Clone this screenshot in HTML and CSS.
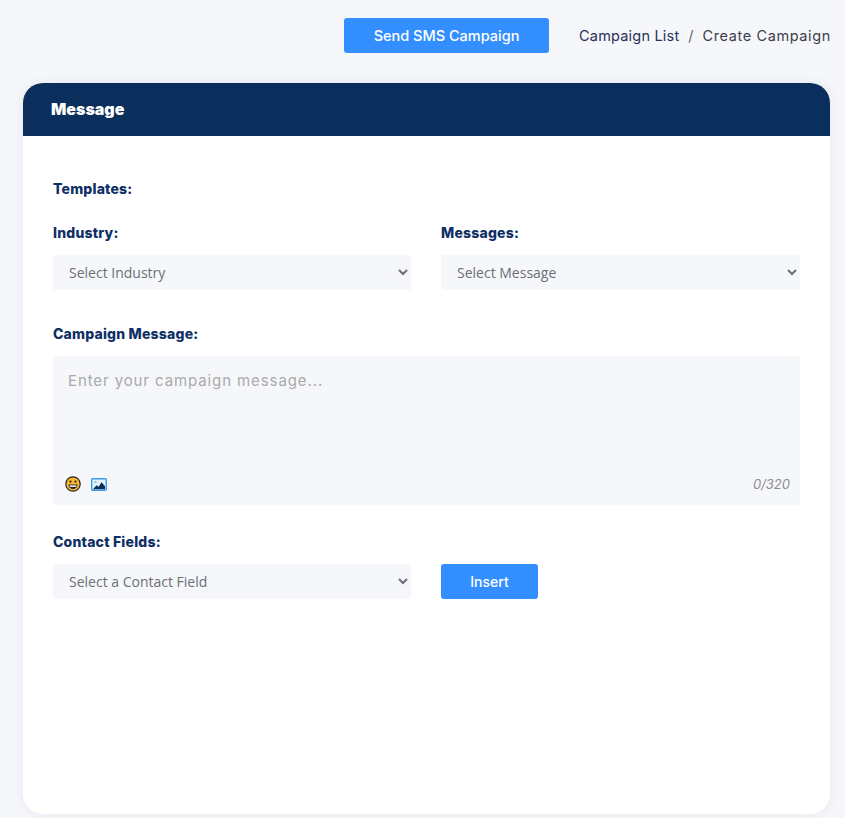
FILE: index.html
```html
<!DOCTYPE html>
<html lang="en">
<head>
  <meta charset="UTF-8">
  <title>Create Campaign</title>
  <link rel="stylesheet" href="styles.css">
</head>
<body>
  <!-- Top bar -->
  <div class="topbar">
    <button class="btn btn-send">Send SMS Campaign</button>
    <div class="breadcrumb">
      <span class="crumb-link">Campaign List</span>
      <span class="crumb-sep">/</span>
      <span class="crumb-current">Create Campaign</span>
    </div>
  </div>

  <!-- Message card -->
  <div class="card">
    <div class="card-header">Message</div>
    <div class="card-body">
      <div class="section-label">Templates:</div>

      <div class="row row-templates">
        <div class="field">
          <label class="field-label">Industry:</label>
          <select class="select"><option>Select Industry</option></select>
        </div>
        <div class="field">
          <label class="field-label">Messages:</label>
          <select class="select"><option>Select Message</option></select>
        </div>
      </div>

      <div class="field field-message">
        <label class="field-label">Campaign Message:</label>
        <div class="message-box">
          <div class="message-text">Enter your campaign message...</div>
          <div class="message-footer">
            <div class="message-tools">
              <svg class="icon" width="16" height="16" viewBox="0 0 16 16">
                <circle cx="8" cy="8" r="7.2" fill="#fdb92e" stroke="#222" stroke-width="1.2"/>
                <circle cx="5.5" cy="5.6" r="1.1" fill="#222"/>
                <circle cx="10.5" cy="5.6" r="1.1" fill="#222"/>
                <path d="M3.4 8.600h9.200c0 2.800-2.100 4.500-4.600 4.500s-4.600-1.700-4.600-4.500z" fill="#222"/>
                <path d="M4.600 9.400h6.800v1.500H4.600z" fill="#fff"/>
              </svg>
              <svg class="icon" width="16" height="13" viewBox="0 0 16 13">
                <rect x="0.7" y="0.7" width="14.600" height="11.600" rx="1" fill="#e6f2fc" stroke="#3a9be8" stroke-width="1.400"/>
                <circle cx="4.400" cy="4" r="1.300" fill="#8cc6f2"/>
                <path d="M2 11.200l3.400-4 2.200 1.600 3-4.600 3.400 4v3z" fill="#0a2f5c"/>
              </svg>
            </div>
            <span class="counter">0/320</span>
          </div>
        </div>
      </div>

      <div class="field field-contact">
        <label class="field-label">Contact Fields:</label>
        <div class="row">
          <div class="contact-col">
            <select class="select"><option>Select a Contact Field</option></select>
          </div>
          <div class="contact-col">
            <button class="btn btn-insert">Insert</button>
          </div>
        </div>
      </div>
    </div>
  </div>
</body>
</html>
```

FILE: styles.css
```css
* {
  margin: 0;
  padding: 0;
  box-sizing: border-box;
}
body {
  font-family: "Inter", "Liberation Sans", sans-serif;
  background: #f6f7fb;
  color: #0f2f66;
  height: 818px;
  overflow: hidden;
  padding: 18px 15px 0 23px;
}

/* Top bar */
.topbar {
  display: flex;
  justify-content: flex-end;
  align-items: center;
  gap: 30px;
  height: 35px;
}
.btn {
  background: #338fff;
  color: #fff;
  border: none;
  border-radius: 3px;
  font-family: "Inter", sans-serif;
  font-weight: 500;
  font-size: 14px;
}
.btn-send {
  width: 205px;
  height: 35px;
  font-size: 14.5px;
  padding-bottom: 1px;
}
.breadcrumb {
  display: flex;
  gap: 9px;
  font-size: 14.5px;
  width: 251px;
  white-space: nowrap;
  color: #333a52;
  line-height: 35px;
}
.crumb-link {
  color: #28305a;
  letter-spacing: 0.2px;
}
.crumb-sep {
  color: #666;
}
.crumb-current {
  color: #3d3d4a;
  letter-spacing: 0.6px;
}

/* Card */
.card {
  margin-top: 30px;
  height: 731px;
  background: #fff;
  border-radius: 20px;
  box-shadow: 0 0 12px rgba(40, 50, 90, 0.08);
  overflow: hidden;
}
.card-header {
  background: #0a2f5c;
  color: #fff;
  height: 53px;
  line-height: 53px;
  padding-left: 28px;
  font-size: 16px;
  font-weight: 900;
}
.card-body {
  padding: 44px 30px 0;
}
.section-label,
.field-label {
  display: block;
  font-size: 14px;
  line-height: 17px;
  font-weight: 800;
  letter-spacing: 0.2px;
  color: #0f2f66;
}
.row {
  display: grid;
  grid-template-columns: 358px 359px;
  column-gap: 30px;
}
.row-templates {
  margin-top: 27px;
}
.field-label {
  margin-bottom: 14px;
}
.select {
  display: block;
  width: 100%;
  height: 35px;
  border: none;
  border-radius: 3px;
  background: #f6f7fb;
  color: #6b6f76;
  font-family: "Open Sans", sans-serif;
  font-size: 14px;
  padding-left: 12px;
}
.field-message {
  margin-top: 35px;
}

/* Message box */
.message-box {
  height: 149px;
  background: #f6f7fb;
  border-radius: 3px;
  padding: 15px 10px 13px 15px;
  display: flex;
  flex-direction: column;
  justify-content: space-between;
}
.message-text {
  font-size: 15px;
  letter-spacing: 0.9px;
  color: #a9a9a9;
}
.message-footer {
  display: flex;
  justify-content: space-between;
  align-items: center;
  margin-left: -3px;
}
.message-tools {
  display: flex;
  align-items: center;
  gap: 10px;
}
.icon {
  display: block;
}
.counter {
  font-size: 13px;
  font-style: italic;
  color: #8a8d92;
}
.field-contact {
  margin-top: 28px;
}
.btn-insert {
  display: block;
  width: 97px;
  height: 35px;
  font-size: 14px;
  padding-bottom: 1px;
}
```
